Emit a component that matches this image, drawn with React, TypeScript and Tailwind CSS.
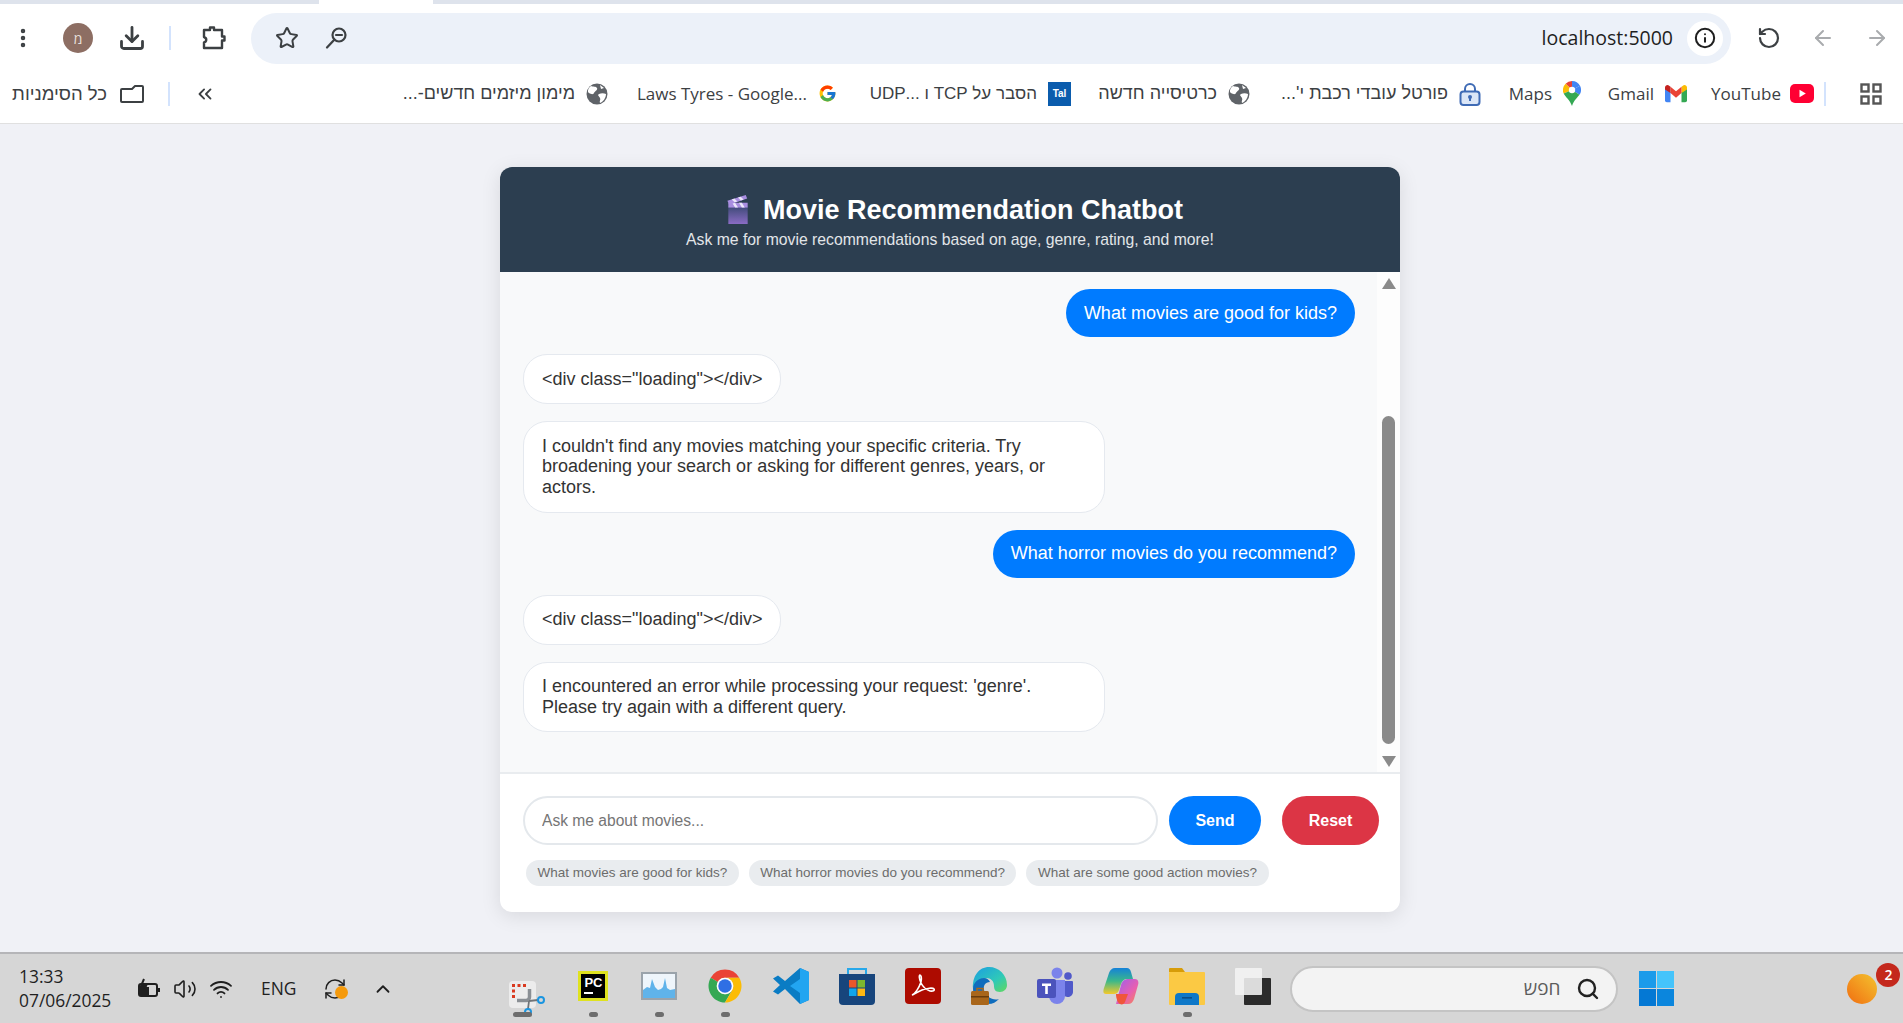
import React from 'react';
import {
  EllipsisVertical, Download, Star, Info, RotateCcw, ArrowLeft, ArrowRight,
  ChevronsLeft, Search, ChevronUp, Volume2, Wifi, RefreshCw,
} from 'lucide-react';

const Globe = () => (
  <svg viewBox="0 0 22 22" className="h-[22px] w-[22px] shrink-0">
    <circle cx="11" cy="11" r="10.5" fill="#5f6368" />
    <path d="M5 3c2 1 5 0 6 2s-2 3-3 5-3 1-5 0-1-5 2-7zM13 11c2-1 5-1 7 0 0 4-3 8-6 9-1-2 1-3 0-5s-3-3-1-4zM14 2l4 3-3 1z" fill="#fff" />
  </svg>
);

const GoogleG = () => (
  <svg viewBox="0 0 48 48" className="h-[19px] w-[19px] shrink-0">
    <path fill="#FFC107" d="M43.6 20H24v8h11.3C33.7 33 29.3 36 24 36c-6.6 0-12-5.400-12-12s5.400-12 12-12c3 0 5.800 1.100 7.900 3l5.700-5.700C34 6 29.300 4 24 4 13 4 4 13 4 24s9 20 20 20 20-9 20-20c0-1.300-.1-2.700-.4-4z" />
    <path fill="#FF3D00" d="M6.300 14.700l6.600 4.800C14.700 15.100 19 12 24 12c3 0 5.800 1.100 7.900 3l5.700-5.700C34 6 29.300 4 24 4 16.300 4 9.700 8.300 6.300 14.700z" />
    <path fill="#4CAF50" d="M24 44c5.200 0 9.900-2 13.400-5.200l-6.200-5.200C29.200 35.100 26.700 36 24 36c-5.200 0-9.600-3.300-11.300-8l-6.500 5C9.500 39.600 16.200 44 24 44z" />
    <path fill="#1976D2" d="M43.600 20H24v8h11.300c-.8 2.200-2.200 4.200-4.100 5.600l6.200 5.200C37 39.200 44 34 44 24c0-1.300-.1-2.700-.4-4z" />
  </svg>
);

const TalIcon = () => (
  <div className="flex h-[24px] w-[23px] shrink-0 items-center justify-center bg-[#0b5cad] text-[10px] font-bold text-white [font-family:'Liberation_Sans',sans-serif]">
    Tal
  </div>
);

const LockIcon = () => (
  <svg viewBox="0 0 22 24" className="h-[24px] w-[22px] shrink-0">
    <path d="M6 11V7a5 5 0 0 1 10 0v4" fill="none" stroke="#3f6bb5" strokeWidth="2" />
    <rect x="1.500" y="9.500" width="19" height="13.500" rx="3" fill="#dbe6f7" stroke="#3f6bb5" strokeWidth="2" />
    <circle cx="11" cy="15" r="2" fill="#3f6bb5" />
    <rect x="10" y="15" width="2" height="4" fill="#3f6bb5" />
  </svg>
);

const MapsIcon = () => (
  <svg viewBox="0 0 18 25" className="h-[25px] w-[18px] shrink-0">
    <path d="M9 0a9 9 0 0 0-6.400 2.700L9 9z" fill="#e94335" />
    <path d="M9 0a9 9 0 0 1 8 4.800L9 9z" fill="#4285f4" />
    <path d="M2.600 2.700A9 9 0 0 0 .7 12.500L9 9z" fill="#fbbc04" />
    <path d="M17 4.800a9 9 0 0 1-.5 9L9 9z" fill="#4285f4" />
    <path d="M.7 12.500C2.300 16 7 19 9 25c2-6 6-9 7.500-11.200L9 9z" fill="#34a853" />
    <circle cx="9" cy="9" r="3.200" fill="#fff" />
  </svg>
);

const GmailIcon = () => (
  <svg viewBox="0 0 24 19" className="h-[19px] w-[22px] shrink-0">
    <path d="M0 3v14a2 2 0 0 0 2 2h4V8z" fill="#4285f4" />
    <path d="M24 3v14a2 2 0 0 1-2 2h-4V8z" fill="#34a853" />
    <path d="M18 2v7l6-4V3c0-2.500-3-3.500-4.500-2z" fill="#fbbc04" />
    <path d="M6 9V2l6 5 6-5v7l-6 5z" fill="#ea4335" />
    <path d="M0 3v2l6 4V2L4.500 1C3 -.5 0 .5 0 3z" fill="#c5221f" />
  </svg>
);

const YoutubeIcon = () => (
  <svg viewBox="0 0 24 19" className="h-[19px] w-[24px] shrink-0">
    <rect width="24" height="19" rx="5" fill="#ff0033" />
    <path d="M9.500 5.800v7.400l6.300-3.700z" fill="#fff" />
  </svg>
);

const GridIcon = () => (
  <svg viewBox="0 0 22 22" className="h-[22px] w-[22px]" fill="none" stroke="#555" strokeWidth="2.400">
    <rect x="1.500" y="1.500" width="7" height="7" />
    <rect x="13.500" y="1.500" width="7" height="7" />
    <rect x="1.500" y="13.500" width="7" height="7" />
    <rect x="13.500" y="13.500" width="7" height="7" />
  </svg>
);

const Extension = () => (
  <svg viewBox="0 0 24 26" className="h-[26px] w-[24px]" fill="none" stroke="#3c4043" strokeWidth="2.400" strokeLinejoin="round">
    <path d="M2 5h6V2.500h4V5h8v6.500h2.500v4H20V23H2v-5.500c3-1 3-4.500 0-5.500z" />
  </svg>
);

// lens top right, handle bottom left, as in the RTL browser
const ZoomLens = () => (
  <svg viewBox="0 0 24 24" className="h-[24px] w-[24px]" fill="none" stroke="#3c4043" strokeWidth="2.200" strokeLinecap="round">
    <circle cx="15" cy="9" r="6.500" />
    <path d="M10.500 13.500L3 21.500" />
    <path d="M12 9h6" />
  </svg>
);

const BookmarkFolder = () => (
  <svg viewBox="0 0 24 20" className="h-[20px] w-[24px] -scale-x-100" fill="none" stroke="#3c4043" strokeWidth="2" strokeLinejoin="round">
    <path d="M1 3a1 1 0 0 1 1-1h7l3 3h10a1 1 0 0 1 1 1v11a1 1 0 0 1-1 1H2a1 1 0 0 1-1-1z" />
  </svg>
);

const Clapper = () => (
  <svg viewBox="0 0 24 30" className="h-[29px] w-[24px] shrink-0">
    <defs>
      <linearGradient id="clap" x1="0" y1="0" x2="0" y2="1">
        <stop offset="0" stopColor="#3f4a78" />
        <stop offset="1" stopColor="#8a6cc4" />
      </linearGradient>
    </defs>
    <rect x="2" y="12" width="20" height="18" fill="url(#clap)" />
    <rect x="2" y="8" width="20" height="5" fill="#a98ee0" />
    <path d="M6 8l3 5h3l-3-5zM13 8l3 5h3l-3-5z" fill="#ece6fa" />
    <path d="M1 6L20 0l1.500 3.500L3 10z" fill="#a98ee0" />
    <path d="M5.500 4.600l3 3 2.800-.9-3-3zM12 2.600l3 3 2.800-.9-3-3z" fill="#ece6fa" />
  </svg>
);

const ChromeIcon = () => (
  <svg viewBox="0 0 48 48" className="h-[38px] w-[36px]">
    <path d="M24 2A22 22 0 0 1 43.050 13H24A11 11 0 0 0 14.470 18.500L4.950 13A22 22 0 0 1 24 2z" fill="#ea4335" />
    <path d="M4.950 13L14.470 18.500A11 11 0 0 0 33.530 29.500L24 46A22 22 0 0 1 4.950 13z" fill="#34a853" />
    <path d="M43.050 13H24A11 11 0 0 1 33.530 29.500L24 46A22 22 0 0 0 43.050 13z" fill="#fbbc04" />
    <circle cx="24" cy="24" r="11" fill="#fff" />
    <circle cx="24" cy="24" r="9" fill="#2f6fe4" />
  </svg>
);

const VsCode = () => (
  <svg viewBox="0 0 36 38" className="h-[38px] w-[36px]">
    <path d="M27 1l9 4v28l-9 4-15-15-7 5.500-5-3 7-6.500-7-6.500 5-3 7 5.500z" fill="#0a7cc4" />
    <path d="M27 1l9 4v28l-9 4V26L17 19l10-7z" fill="#22a5f1" />
  </svg>
);

const StoreIcon = () => (
  <svg viewBox="0 0 36 38" className="h-[38px] w-[36px]">
    <path d="M9 7V2h18v5" fill="none" stroke="#28a8ea" strokeWidth="2" />
    <path d="M0 7h36v27a4 4 0 0 1-4 4H4a4 4 0 0 1-4-4z" fill="#17457c" />
    <rect x="10" y="13" width="7.500" height="7.500" fill="#e8562a" />
    <rect x="18.500" y="13" width="7.500" height="7.500" fill="#7cb82f" />
    <rect x="10" y="21.500" width="7.500" height="7.500" fill="#10a5ea" />
    <rect x="18.500" y="21.500" width="7.500" height="7.500" fill="#fdb813" />
  </svg>
);

const PdfIcon = () => (
  <svg viewBox="0 0 36 36" className="h-[36px] w-[36px]">
    <rect width="36" height="36" rx="4" fill="#ad0b00" />
    <path d="M7 27c3-1 7-7 9-13 1-4 0-7-1-7s-1 4 1 8c2 4 6 7 9 8 3 .5 5-.5 4-2s-7-1-12 1-9 5-10 5z" fill="none" stroke="#fff" strokeWidth="1.600" />
  </svg>
);

const EdgeIcon = () => (
  <svg viewBox="0 0 36 38" className="h-[38px] w-[36px]">
    <defs>
      <linearGradient id="edge" x1="0" y1="0" x2="1" y2="1">
        <stop offset="0" stopColor="#1b9de2" />
        <stop offset=".6" stopColor="#2fc9b8" />
        <stop offset="1" stopColor="#63d85e" />
      </linearGradient>
    </defs>
    <path d="M18 0c10 0 18 8 18 18 0 4-3 7-7 7-5 0-6-3-6-6 0-5-3-8-8-8-6 0-11 5-13 11C1 9 8 0 18 0z" fill="url(#edge)" />
    <path d="M2 22c0-6 5-11 11-11 3 0 5 2 6 4-5 0-7 4-6 8 2 7 9 11 15 9-3 3-6 5-11 5C8 37 2 30 2 22z" fill="#0f6cbd" />
    <rect x="0" y="24" width="18" height="14" rx="1.500" fill="#a9661b" />
    <rect x="0" y="29" width="18" height="1.500" fill="#6a3c0c" />
    <rect x="6" y="21.500" width="6" height="3" fill="none" stroke="#a9661b" strokeWidth="1.500" />
  </svg>
);

const TeamsIcon = () => (
  <svg viewBox="0 0 36 38" className="h-[38px] w-[36px]">
    <circle cx="20" cy="6" r="5.500" fill="#7b83eb" />
    <circle cx="31" cy="9" r="3.800" fill="#5059c9" />
    <path d="M26 14h9a1 1 0 0 1 1 1v10c0 3-3 5-5 5s-5-1-5-3z" fill="#5059c9" />
    <path d="M12 13h16v16a8 8 0 0 1-16 0z" fill="#7b83eb" />
    <rect x="0" y="12" width="19" height="19" rx="2" fill="#4b53bc" />
    <path d="M5 16.500h9v2.500h-3.200v8h-2.600v-8H5z" fill="#fff" />
  </svg>
);

const CopilotIcon = () => (
  <svg viewBox="0 0 36 38" className="h-[38px] w-[36px]">
    <defs>
      <linearGradient id="copA" x1="0" y1="0" x2="0" y2="1">
        <stop offset="0" stopColor="#1582d8" />
        <stop offset=".5" stopColor="#3bb88a" />
        <stop offset="1" stopColor="#f5c92a" />
      </linearGradient>
      <linearGradient id="copB" x1="0" y1="0" x2="1" y2="1">
        <stop offset="0" stopColor="#9a5ff0" />
        <stop offset=".6" stopColor="#e85fb0" />
        <stop offset="1" stopColor="#f78b4a" />
      </linearGradient>
    </defs>
    <path d="M25 12h7c3 0 4 3 3 6l-4 14c-1 3-3 5-6 5H13l5-19c1-4 4-6 7-6z" fill="url(#copB)" />
    <path d="M12 1h12c2 0 3 1 4 4l2 7h-6c-3 0-5 2-6 5l-2 6c-1 3-3 4-5 4H3c-3 0-3-3-2-6l5-15c1-3 3-5 6-5z" fill="url(#copA)" />
    <path d="M13 27h12l-3 8c-1 2-3 3-5 2-2-1-4-5-4-10z" fill="#f0563a" />
  </svg>
);

const ExplorerIcon = () => (
  <svg viewBox="0 0 36 38" className="h-[38px] w-[36px]">
    <path d="M0 2a1 1 0 0 1 1-1h12l3 4H0z" fill="#d79c09" />
    <rect x="0" y="5" width="36" height="33" rx="1" fill="#fbc944" />
    <path d="M6 38v-8a4 4 0 0 1 4-4h16a4 4 0 0 1 4 4v8z" fill="#0f78c8" />
    <rect x="13" y="30" width="10" height="1.600" fill="#0a4f8a" />
  </svg>
);

const TaskView = () => (
  <svg viewBox="0 0 36 38" className="h-[38px] w-[36px]">
    <rect x="9" y="11" width="27" height="27" rx="1" fill="#2b2b2b" />
    <rect x="0" y="1" width="27" height="27" rx="1" fill="#f4f4f4" opacity="0.88" />
  </svg>
);

// sits low in its slot, the bottom handle runs over the running indicator
const SnipIcon = () => (
  <svg viewBox="0 0 36 44" className="h-[44px] w-[36px] overflow-visible">
    <rect x="0" y="17" width="27" height="27" rx="4" fill="#ececec" />
    <path d="M3 20h3v3H3zM8.500 20h3v3h-3zM14 20h3v3h-3zM3 25.500h3v3H3zM3 31h3v3H3z" fill="#d9391f" />
    <path d="M20.500 25v8a3.500 3.500 0 0 1-3.500 3.500H8" fill="none" stroke="#8a8f94" strokeWidth="3.500" />
    <path d="M20 37l9-1M20 37l-1 8" fill="none" stroke="#6f7478" strokeWidth="1.800" />
    <circle cx="32" cy="36" r="3" fill="none" stroke="#1a95e0" strokeWidth="2" />
    <circle cx="19" cy="48" r="3" fill="none" stroke="#1a95e0" strokeWidth="2" />
  </svg>
);

const PyCharmIcon = () => (
  <div className="flex h-[30px] w-[30px] flex-col justify-between border-[3px] border-[#dfe21f] bg-black px-[3px] py-[2px] text-[13px] font-bold leading-[14px] text-white [font-family:'Liberation_Sans',sans-serif]">
    <span>PC</span>
    <span className="mb-[2px] h-[2px] w-[9px] bg-white" />
  </div>
);

const MonitorIcon = () => (
  <svg viewBox="0 0 36 28" className="h-[28px] w-[36px]">
    <rect x="1" y="1" width="34" height="26" fill="#eef5fb" stroke="#9aa3ab" strokeWidth="2" />
    <path d="M2 18l4-3 3 1 2-9 3 8 3 3 3-1 2-2 2-9 2 10 3 2 5-1v9H2z" fill="#5fb3ea" />
  </svg>
);

const WinLogo = () => (
  <svg viewBox="0 0 35 35" className="h-[35px] w-[35px]">
    <rect width="17" height="17" fill="#1c9bea" />
    <rect x="18" width="17" height="17" fill="#45c4fb" />
    <rect y="18" width="17" height="17" fill="#0478d4" />
    <rect x="18" y="18" width="17" height="17" fill="#0b86dd" />
  </svg>
);

function Bookmark({ label, icon, width, rtl, tight }: { label: string; icon: React.ReactNode; width: string; rtl?: boolean; tight?: boolean }) {
  return (
    <div className={`flex items-center justify-end ${tight ? 'gap-[9px]' : 'gap-[11px]'} ${width}`}>
      <span
        dir={rtl ? 'rtl' : 'ltr'}
        className={`whitespace-nowrap text-[#3c4043] ${rtl ? "text-[18px] [font-family:'Liberation_Sans',sans-serif]" : 'text-[17px]'}`}
      >
        {label}
      </span>
      {icon}
    </div>
  );
}

function TaskIcon({ children, running, wide, name }: { children: React.ReactNode; running?: boolean; wide?: boolean; name: string }) {
  return (
    <div title={name} className="flex h-[56px] w-[36px] flex-col items-center justify-between">
      <div className="flex h-[44px] items-center justify-center pt-[7px]">{children}</div>
      <span className={`h-[5px] rounded-full ${wide ? 'mr-[9px] w-[19px]' : 'w-[9px]'} ${running ? 'bg-[#6d6d6d]' : 'bg-transparent'}`} />
    </div>
  );
}

function BrowserChrome() {
  return (
    <div className="shrink-0 bg-white [font-family:'Open_Sans','Liberation_Sans',sans-serif]">
      <div className="flex h-[4px] bg-[#dee3ec]">
        <div className="ml-[319px] h-full w-[114px] bg-white" />
      </div>
      <div className="flex h-[69px] items-center pb-[1px]">
        <EllipsisVertical className="ml-[11px] h-[24px] w-[24px] text-[#3c4043]" strokeWidth={2.5} />
        <div className="ml-[28px] flex h-[30px] w-[30px] items-center justify-center rounded-full bg-[#8d6e63] text-[14px] text-[#e8e0dc]">מ</div>
        <Download className="ml-[25px] h-[28px] w-[28px] text-[#3c4043]" strokeWidth={2.4} />
        <div className="ml-[23px] h-[24px] w-[2px] bg-[#d3e3fd]" />
        <div className="ml-[31px] flex"><Extension /></div>
        <div className="ml-[25px] flex h-[51px] w-[1480px] items-center rounded-full bg-[#ecf1f9] pl-[24px] pr-[8px]">
          <Star className="h-[24px] w-[24px] text-[#3c4043]" strokeWidth={2} />
          <div className="ml-[25px] flex"><ZoomLens /></div>
          <span className="ml-auto text-[19.500px] text-[#1f1f1f]">localhost:5000</span>
          <div className="ml-[14px] flex h-[35px] w-[36px] items-center justify-center rounded-full bg-white">
            <Info className="h-[22px] w-[22px] text-[#1f1f1f]" strokeWidth={2.2} />
          </div>
        </div>
        <RotateCcw className="ml-[26px] h-[24px] w-[24px] text-[#3c4043]" strokeWidth={2.2} />
        <ArrowLeft className="ml-[30px] h-[24px] w-[24px] text-[#a9abae]" strokeWidth={2} />
        <ArrowRight className="ml-[30px] h-[24px] w-[24px] text-[#a9abae]" strokeWidth={2} />
      </div>
      <div className="flex h-[51px] items-center border-b border-[#e0e0e0] pb-[9px]">
        <span dir="rtl" className="ml-[12px] w-[95px] whitespace-nowrap text-right text-[18.500px] text-[#3c4043] [font-family:'Liberation_Sans',sans-serif]">כל הסימניות</span>
        <div className="ml-[13px] flex"><BookmarkFolder /></div>
        <div className="ml-[24px] h-[24px] w-[2px] bg-[#d3e3fd]" />
        <ChevronsLeft className="ml-[24px] h-[22px] w-[22px] text-[#3c4043]" strokeWidth={2} />
        <Bookmark rtl width="w-[392px]" label="מימון מיזמים חדשים-..." icon={<Globe />} />
        <Bookmark width="w-[229px]" label="Laws Tyres - Google..." icon={<GoogleG />} />
        <div className="flex w-[234px] items-center justify-end gap-[11px]">
          <span dir="rtl" className="whitespace-nowrap text-[17px] text-[#3c4043] [font-family:'Liberation_Sans',sans-serif]">הסבר על TCP ו ...UDP</span>
          <TalIcon />
        </div>
        <Bookmark rtl width="w-[179px]" label="כרטיסייה חדשה" icon={<Globe />} />
        <Bookmark rtl width="w-[231px]" label="פורטל עובדי רכבת י'..." icon={<LockIcon />} />
        <Bookmark width="w-[100px]" label="Maps" icon={<MapsIcon />} />
        <Bookmark width="w-[106px]" label="Gmail" icon={<GmailIcon />} />
        <Bookmark tight width="w-[127px]" label="YouTube" icon={<YoutubeIcon />} />
        <div className="ml-[10px] h-[24px] w-[2px] bg-[#d3e3fd]" />
        <div className="ml-[34px] flex"><GridIcon /></div>
      </div>
    </div>
  );
}

function Bubble({ children, user, className = '' }: { children: React.ReactNode; user?: boolean; className?: string }) {
  return (
    <div
      className={`max-w-[582px] rounded-[24px] px-[18px] py-[13.600px] text-[18px] leading-[20.800px] ${
        user ? 'self-end bg-[#007bff] text-white' : 'self-start border border-[#e5e9ef] bg-white text-[#333]'
      } ${className}`}
    >
      {children}
    </div>
  );
}

function ChatCard() {
  return (
    <div className="flex h-[745px] w-[900px] flex-col overflow-hidden rounded-[12px] bg-white shadow-[0_4px_20px_rgba(0,0,0,0.1)] [font-family:'Liberation_Sans',Arial,sans-serif]">
      <div className="flex h-[105px] shrink-0 flex-col items-center justify-center bg-[#2c3e50] pt-[2px] text-white">
        <div className="flex items-center gap-[13px] pl-[9px] pt-[2px] text-[27px] font-bold leading-[34px]">
          <Clapper />
          <span>Movie Recommendation Chatbot</span>
        </div>
        <p className="mt-[2px] text-[15.750px] leading-[22px] text-[#e2e5e8]">Ask me for movie recommendations based on age, genre, rating, and more!</p>
      </div>

      <div className="flex h-[500px] shrink-0 bg-[#f8f9fa]">
        <div className="flex flex-1 flex-col gap-[17px] pl-[23px] pr-[22px] pt-[17px]">
          <Bubble user>What movies are good for kids?</Bubble>
          <Bubble>{'<div class="loading"></div>'}</Bubble>
          <Bubble className="w-[582px]">
            I couldn't find any movies matching your specific criteria. Try broadening your search or asking for different genres, years, or actors.
          </Bubble>
          <Bubble user>What horror movies do you recommend?</Bubble>
          <Bubble>{'<div class="loading"></div>'}</Bubble>
          <Bubble className="w-[582px]">
            I encountered an error while processing your request: 'genre'. Please try again with a different query.
          </Bubble>
        </div>
        <div className="flex w-[23px] shrink-0 flex-col items-center bg-[#fdfdfd] pb-[5px] pt-[6px]">
          <div className="h-0 w-0 border-x-[7.500px] border-b-[11px] border-x-transparent border-b-[#8a8a8a]" />
          <div className="mt-[127px] w-[13px] flex-1 rounded-full bg-[#8a8a8a]" />
          <div className="mt-[12px] h-0 w-0 border-x-[7.500px] border-t-[11px] border-x-transparent border-t-[#8a8a8a]" />
        </div>
      </div>

      <div className="flex flex-1 flex-col border-t-2 border-[#e9ecef] pl-[23px] pr-[20px] pt-[22px]">
        <div className="flex items-center">
          <input
            placeholder="Ask me about movies..."
            className="h-[49px] w-[635px] rounded-full border-2 border-[#e4e8ec] bg-white px-[17px] text-[15.600px] outline-none placeholder:text-[#757575]"
          />
          <button className="ml-[11px] h-[49px] w-[92px] rounded-full bg-[#007bff] text-[16px] font-bold text-white">Send</button>
          <button className="ml-[21px] h-[49px] w-[97px] rounded-full bg-[#dc3545] text-[16px] font-bold text-white">Reset</button>
        </div>
        <div className="ml-[3px] mt-[15px] flex gap-[10px]">
          {['What movies are good for kids?', 'What horror movies do you recommend?', 'What are some good action movies?'].map((q) => (
            <span key={q} className="flex h-[26px] items-center rounded-full bg-[#e9ecef] px-[11.500px] text-[13.500px] text-[#6c6c6c]">{q}</span>
          ))}
        </div>
      </div>
    </div>
  );
}

function Taskbar() {
  return (
    <div className="flex h-[71px] shrink-0 items-center border-t-2 border-[#b5b5b8] bg-[#d6d6d6] text-[#1f1f1f] [font-family:'Open_Sans','Liberation_Sans',sans-serif]">
      <div className="mb-[2px] ml-[19px] w-[118px] text-[17.400px] leading-[24px]">
        <div>13:33</div>
        <div>07/06/2025</div>
      </div>
      <svg viewBox="0 0 24 24" className="h-[24px] w-[24px]" fill="none" stroke="#1f1f1f" strokeWidth="2">
        <rect x="2" y="7" width="18" height="12" rx="2" />
        <rect x="3" y="10" width="9" height="8" fill="#1f1f1f" stroke="none" />
        <path d="M22 11v4M7 2L4 9h5l-2 5" />
      </svg>
      <Volume2 className="ml-[12px] h-[24px] w-[24px]" strokeWidth={1.6} />
      <Wifi className="ml-[12px] h-[24px] w-[24px]" strokeWidth={1.8} />
      <span className="ml-[28px] text-[17.400px]">ENG</span>
      <div className="relative ml-[27px]">
        <RefreshCw className="h-[24px] w-[24px]" strokeWidth={1.5} />
        <span className="absolute bottom-[2px] right-[-1px] h-[13px] w-[13px] rounded-full bg-[#f59a0c]" />
      </div>
      <ChevronUp className="ml-[25px] h-[22px] w-[22px]" strokeWidth={2} />

      <div className="ml-[115px] flex gap-[30px]">
        <TaskIcon name="Snipping Tool" running wide><SnipIcon /></TaskIcon>
        <TaskIcon name="PyCharm" running><PyCharmIcon /></TaskIcon>
        <TaskIcon name="Monitor" running><MonitorIcon /></TaskIcon>
        <TaskIcon name="Chrome" running><ChromeIcon /></TaskIcon>
        <TaskIcon name="VS Code"><VsCode /></TaskIcon>
        <TaskIcon name="Store"><StoreIcon /></TaskIcon>
        <TaskIcon name="Acrobat"><PdfIcon /></TaskIcon>
        <TaskIcon name="Edge"><EdgeIcon /></TaskIcon>
        <TaskIcon name="Teams"><TeamsIcon /></TaskIcon>
        <TaskIcon name="Copilot"><CopilotIcon /></TaskIcon>
        <TaskIcon name="Explorer" running><ExplorerIcon /></TaskIcon>
        <TaskIcon name="Task view"><TaskView /></TaskIcon>
      </div>

      <div className="ml-[19px] flex h-[46px] w-[328px] items-center justify-end rounded-full border-2 border-[#c4c4c4] bg-[#f3f3f3] pr-[16px]">
        <span className="text-[19px] text-[#5c5c5c]">חפש</span>
        <Search className="ml-[16px] h-[24px] w-[24px] text-[#222]" strokeWidth={2.4} />
      </div>
      <div className="ml-[21px] flex"><WinLogo /></div>
      <div className="relative ml-[173px] h-[30px] w-[30px] rounded-full bg-gradient-to-tr from-[#ef6c10] to-[#f2c22e]">
        <span className="absolute left-[29px] top-[-11px] flex h-[24px] w-[24px] items-center justify-center rounded-full bg-[#c4281c] text-[14px] font-semibold text-white">2</span>
      </div>
    </div>
  );
}

export default function App() {
  return (
    <div className="flex h-[1023px] w-[1903px] flex-col overflow-hidden bg-[#f0f1f6]">
      <BrowserChrome />
      <main className="flex flex-1 justify-center pr-[3px] pt-[43px]">
        <ChatCard />
      </main>
      <Taskbar />
    </div>
  );
}
